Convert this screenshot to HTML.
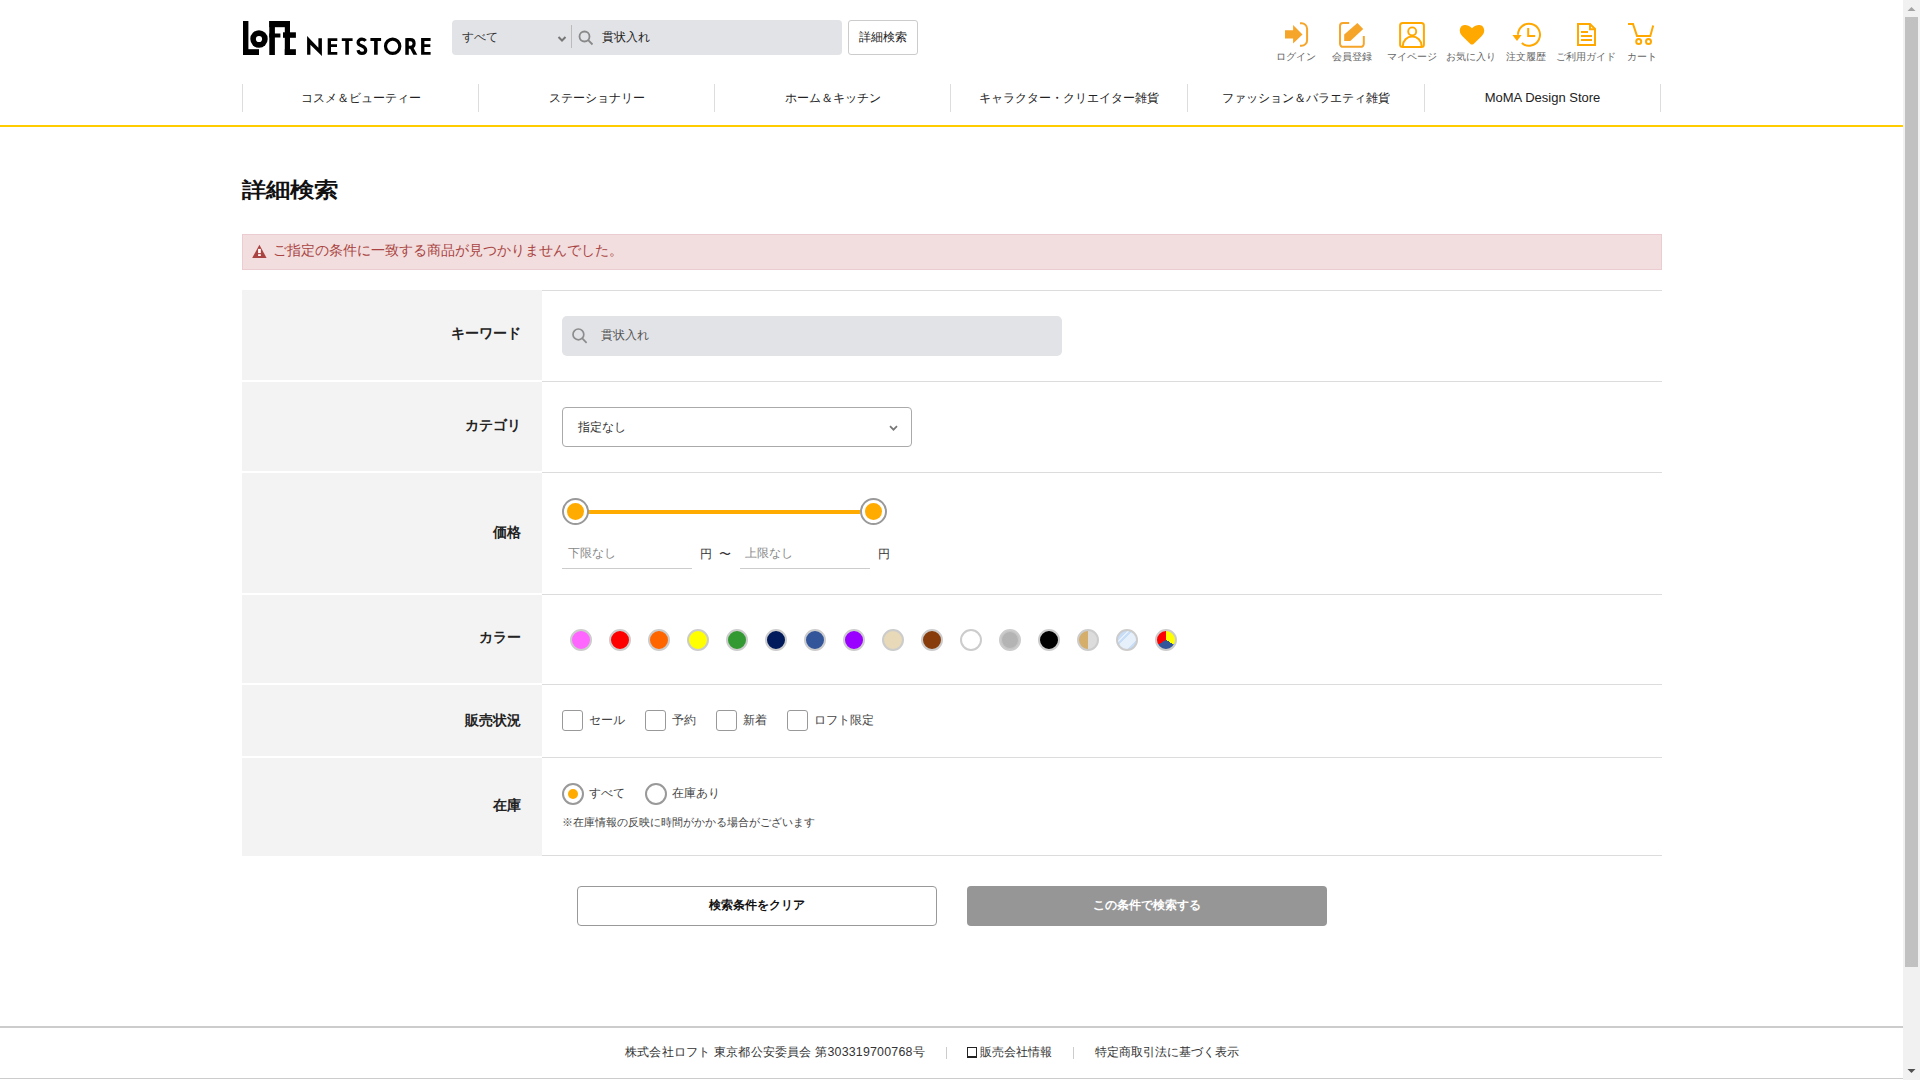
<!DOCTYPE html>
<html lang="ja">
<head>
<meta charset="utf-8">
<title>詳細検索 | ロフト公式通販サイト</title>
<style>
*{box-sizing:border-box;margin:0;padding:0}
html,body{width:1920px;height:1080px;overflow:hidden;background:#fff}
body{font-family:"Liberation Sans",sans-serif;color:#222;position:relative}
.a{position:absolute;white-space:nowrap}
.ic{position:absolute}
.lbl{position:absolute;font-size:10px;color:#666;text-align:center;width:70px;line-height:12px}
.nav{position:absolute;top:84px;height:28px;width:236.33px;border-left:1px solid #ddd;font-size:12px;line-height:28px;text-align:center;color:#222}
.th{position:absolute;left:242px;width:300px;background:#f3f3f3}
.ln{position:absolute;left:542px;width:1120px;height:1px;background:#dcdcdc}
.thl{position:absolute;right:1399px;font-size:14px;font-weight:bold;color:#222;line-height:16px}
.sw{position:absolute;top:629px;width:22px;height:22px;border-radius:50%;border:2px solid #ccc}
.cb{position:absolute;top:710px;width:21px;height:21px;border:1px solid #999;border-radius:3px;background:#fff}
.cbt{position:absolute;top:712px;font-size:12px;color:#444;line-height:16px}
</style>
</head>
<body>
<!-- HEADER -->
<svg class="ic" style="left:240px;top:18px" width="200" height="42" viewBox="240 18 200 42">
  <g fill="#000">
    <rect x="243" y="21" width="5.4" height="34"/>
    <rect x="243" y="49.2" width="16" height="5.8"/>
    <circle cx="259" cy="39" r="8.7"/>
    <rect x="269.3" y="21" width="5.6" height="34"/>
    <rect x="269.3" y="21" width="20.7" height="6.2"/>
    <rect x="269.3" y="33.5" width="11.1" height="4"/>
    <rect x="284.8" y="21" width="5.2" height="34"/>
    <rect x="283" y="32.3" width="12.9" height="5.5"/>
    <rect x="284.8" y="49.2" width="11.1" height="5.8"/>
  </g>
  <circle cx="259" cy="39" r="3.1" fill="#fff"/>
  <g fill="#000">
    <path d="M307.1 36.1 L318.4 47.8 V38.2 H321.9 V55.9 L310.4 44.7 V54.8 H307.1 Z"/>
    <path d="M327.7 38.2 H337.3 V41 H331 V44.2 H337 V46.9 H331 V51.9 H337.3 V54.8 H327.7 Z"/>
    <path d="M341.8 38.2 H352.6 V41 H348.9 V54.8 H345.3 V41 H341.8 Z"/>
    <path d="M370.4 38.1 H381.1 V41 H377.7 V54.8 H374.1 V41 H370.4 Z"/>
    <rect x="405.3" y="38.1" width="3.5" height="16.7"/>
    <path d="M409.4 47.3 H413.2 L417.3 54.8 H413.4 Z"/>
    <path d="M421.1 38.1 H430.6 V41 H424.4 V44.3 H430.3 V47 H424.4 V52 H430.6 V54.8 H421.1 Z"/>
  </g>
  <g fill="none" stroke="#000" stroke-width="3.2">
    <path d="M365.6 40.9 C364.6 39.4 363.4 39.1 362 39.1 C359.6 39.1 358.1 40.6 358.1 42.4 C358.1 44.5 360 45.3 362 46.1 C364.4 47.1 365.7 48.3 365.7 50.3 C365.7 52.3 364.1 53.4 361.8 53.4 C359.8 53.4 358.5 52.2 358 50.1"/>
    <circle cx="392.65" cy="46.3" r="7.15"/>
    <path d="M407 39.6 H410.3 C412.9 39.6 414.1 41.3 414.1 43.4 C414.1 45.6 412.9 47.2 410.3 47.2 H407" stroke-width="3.1"/>
  </g>
</svg>

<div class="a" style="left:452px;top:20px;width:390px;height:35px;background:#e2e3e7;border-radius:4px"></div>
<div class="a" style="left:462px;top:29px;font-size:12px;line-height:16px;color:#333">すべて</div>
<svg class="ic" style="left:557px;top:35px" width="10" height="8" viewBox="0 0 10 8"><path d="M1.5 2 L5 5.5 L8.5 2" stroke="#777" stroke-width="2" fill="none"/></svg>
<div class="a" style="left:571px;top:25px;width:1px;height:23px;background:#bbb"></div>
<svg class="ic" style="left:578px;top:30px" width="16" height="16" viewBox="0 0 16 16"><circle cx="6.5" cy="6.5" r="5" stroke="#888" stroke-width="1.8" fill="none"/><path d="M10.2 10.2 L14.5 14.5" stroke="#888" stroke-width="1.8"/></svg>
<div class="a" style="left:602px;top:29px;font-size:12px;line-height:16px;color:#222">貫状入れ</div>
<div class="a" style="left:848px;top:20px;width:70px;height:35px;border:1px solid #ccc;border-radius:3px;background:#fff;font-size:12px;line-height:33px;text-align:center;color:#222">詳細検索</div>

<!-- header icons -->
<svg class="ic" style="left:1270px;top:15px" width="400" height="40" viewBox="1270 15 400 40">
  <g fill="#f5a52a">
    <path d="M1285 30.3 H1293.1 V25 L1302.5 34.4 L1293.1 43.6 V38.4 H1285 Z"/>
    <path d="M1344.2 34.4 L1357.4 22.9 L1363.2 29 L1350.3 41 H1344.2 Z"/>
  </g>
  <g fill="none" stroke="#f5a52a" stroke-width="2">
    <path d="M1300 23.2 H1301.5 A5.6 5.6 0 0 1 1307.1 28.8 V40.2 A5.6 5.6 0 0 1 1301.5 45.8 H1300"/>
    <path d="M1349.2 23 H1343 A3 3 0 0 0 1340 26 V43.8 A3 3 0 0 0 1343 46.8 H1360.8 A3 3 0 0 0 1363.8 43.8 V36"/>
  </g>
  <g fill="none" stroke="#ffa800" stroke-width="2">
    <rect x="1400.1" y="23" width="23.8" height="23.9" rx="2.5"/>
    <circle cx="1412.2" cy="31.4" r="4" stroke-width="1.9"/>
    <path d="M1402.8 46 A9.4 9.6 0 0 1 1421.6 46"/>
    <path d="M1521.8 43.1 A11 11 0 1 0 1518 34.8"/>
    <path d="M1528.2 28.1 V36 H1535.2"/>
    <path d="M1578 24 H1590 L1595 29 V45 H1578 Z"/>
    <path d="M1590 24 V29.2 H1595"/>
    <path d="M1581 32.1 H1588 M1581 36 H1592 M1581 40 H1592"/>
    <path d="M1628 24 H1633 L1637 35.9 H1650.3 L1653.2 25.6"/>
    <circle cx="1638.7" cy="41.6" r="2.5"/>
    <circle cx="1648.5" cy="41.6" r="2.5"/>
  </g>
  <g fill="#ffa800">
    <path d="M1512.4 35 H1521.6 L1517 40.9 Z"/>
    <path d="M1472 28.3 C1469.5 25.2 1466.8 24.8 1464.6 24.9 C1461.5 25.1 1459.8 27.6 1459.8 30.7 C1459.8 33.3 1461.2 35 1463.2 36.9 L1470.4 43.9 C1471.3 44.8 1472.7 44.8 1473.6 43.9 L1480.8 36.9 C1482.8 35 1484.2 33.3 1484.2 30.7 C1484.2 27.6 1482.5 25.1 1479.4 24.9 C1477.2 24.8 1474.5 25.2 1472 28.3 Z"/>
  </g>
</svg>
<div class="lbl" style="left:1261.3px;top:51px">ログイン</div>
<div class="lbl" style="left:1316.5px;top:51px">会員登録</div>
<div class="lbl" style="left:1376.5px;top:51px">マイページ</div>
<div class="lbl" style="left:1436px;top:51px">お気に入り</div>
<div class="lbl" style="left:1491.3px;top:51px">注文履歴</div>
<div class="lbl" style="left:1551.2px;top:51px">ご利用ガイド</div>
<div class="lbl" style="left:1606.5px;top:51px">カート</div>

<!-- NAV -->
<div class="nav" style="left:242px;width:236px">コスメ＆ビューティー</div>
<div class="nav" style="left:478px;width:236px">ステーショナリー</div>
<div class="nav" style="left:714px;width:236px">ホーム＆キッチン</div>
<div class="nav" style="left:950px;width:237px">キャラクター・クリエイター雑貨</div>
<div class="nav" style="left:1187px;width:237px">ファッション＆バラエティ雑貨</div>
<div class="nav" style="left:1424px;border-right:1px solid #ddd;width:237px;font-size:13px">MoMA Design Store</div>
<div class="a" style="left:0;top:125px;width:1903px;height:2px;background:#ffcc00"></div>

<!-- TITLE -->
<div class="a" style="left:242px;top:178px;font-size:24px;font-weight:bold;line-height:28px;color:#111;transform:scaleY(0.86);transform-origin:0 0">詳細検索</div>

<!-- ALERT -->
<div class="a" style="left:242px;top:234px;width:1420px;height:36px;background:#f2dede;border:1px solid #ebccd1"></div>
<svg class="ic" style="left:252px;top:244px" width="15" height="15" viewBox="0 0 15 15"><path d="M7.4 0.7 L14.6 14 L0.2 14 Z" fill="#a94442"/><rect x="6.1" y="4.9" width="2.7" height="4.2" fill="#fff"/><rect x="6.1" y="10.2" width="2.7" height="1.8" fill="#fff"/></svg>
<div class="a" style="left:273px;top:242px;font-size:14px;line-height:16px;color:#a94442">ご指定の条件に一致する商品が見つかりませんでした。</div>

<!-- TABLE -->
<div class="th" style="top:290px;height:90px"></div>
<div class="th" style="top:382px;height:89px"></div>
<div class="th" style="top:473px;height:120px"></div>
<div class="th" style="top:595px;height:88px"></div>
<div class="th" style="top:685px;height:71px"></div>
<div class="th" style="top:758px;height:98px"></div>
<div class="ln" style="top:290px"></div>
<div class="ln" style="top:381px"></div>
<div class="ln" style="top:472px"></div>
<div class="ln" style="top:594px"></div>
<div class="ln" style="top:684px"></div>
<div class="ln" style="top:757px"></div>
<div class="ln" style="top:855px"></div>

<div class="thl" style="top:325px">キーワード</div>
<div class="thl" style="top:417px">カテゴリ</div>
<div class="thl" style="top:524px">価格</div>
<div class="thl" style="top:629px">カラー</div>
<div class="thl" style="top:712px">販売状況</div>
<div class="thl" style="top:797px">在庫</div>

<!-- keyword -->
<div class="a" style="left:562px;top:316px;width:500px;height:40px;background:#e2e3e7;border-radius:5px"></div>
<svg class="ic" style="left:571px;top:327px" width="18" height="18" viewBox="0 0 18 18"><circle cx="7.4" cy="7.4" r="5.4" stroke="#8c8c8c" stroke-width="1.7" fill="none"/><path d="M11.3 11.3 L15.6 15.8" stroke="#8c8c8c" stroke-width="1.7"/></svg>
<div class="a" style="left:601px;top:327px;font-size:12px;line-height:16px;color:#555">貫状入れ</div>

<!-- category -->
<div class="a" style="left:562px;top:407px;width:350px;height:40px;border:1px solid #aaa;border-radius:4px;background:#fff"></div>
<div class="a" style="left:578px;top:419px;font-size:12px;line-height:16px;color:#333">指定なし</div>
<svg class="ic" style="left:888px;top:424px" width="11" height="8" viewBox="0 0 11 8"><path d="M2 2.2 L5.5 5.7 L9 2.2" stroke="#777" stroke-width="1.7" fill="none"/></svg>

<!-- price -->
<div class="a" style="left:588px;top:510px;width:272px;height:4px;background:#ffab00"></div>
<div class="a" style="left:562px;top:498px;width:27px;height:27px;border-radius:50%;background:#fff;border:2px solid #999"></div>
<div class="a" style="left:567px;top:503px;width:17px;height:17px;border-radius:50%;background:#ffab00"></div>
<div class="a" style="left:860px;top:498px;width:27px;height:27px;border-radius:50%;background:#fff;border:2px solid #999"></div>
<div class="a" style="left:865px;top:503px;width:17px;height:17px;border-radius:50%;background:#ffab00"></div>
<div class="a" style="left:562px;top:568px;width:130px;height:1px;background:#ccc"></div>
<div class="a" style="left:740px;top:568px;width:130px;height:1px;background:#ccc"></div>
<div class="a" style="left:568px;top:545px;font-size:12px;line-height:16px;color:#888">下限なし</div>
<div class="a" style="left:745px;top:545px;font-size:12px;line-height:16px;color:#888">上限なし</div>
<div class="a" style="left:700px;top:546px;font-size:12px;line-height:16px;color:#333">円</div>
<div class="a" style="left:719px;top:546px;font-size:12px;line-height:16px;color:#333">〜</div>
<div class="a" style="left:878px;top:546px;font-size:12px;line-height:16px;color:#333">円</div>

<!-- colors -->
<div class="sw" style="left:570px;background:#ff66ff"></div>
<div class="sw" style="left:609px;background:#ff0000"></div>
<div class="sw" style="left:648px;background:#ff6600"></div>
<div class="sw" style="left:687px;background:#ffff00"></div>
<div class="sw" style="left:726px;background:#339933"></div>
<div class="sw" style="left:765px;background:#001a5c"></div>
<div class="sw" style="left:804px;background:#335599"></div>
<div class="sw" style="left:843px;background:#9900ff"></div>
<div class="sw" style="left:882px;background:#e8d9b8"></div>
<div class="sw" style="left:921px;background:#883c0c"></div>
<div class="sw" style="left:960px;background:#ffffff"></div>
<div class="sw" style="left:999px;background:#b4b4b4;box-shadow:inset 0 0 0 1px #c8c8c8"></div>
<div class="sw" style="left:1038px;background:#000000"></div>
<div class="sw" style="left:1077px;background:linear-gradient(90deg,#d4ae6a 50%,#dcdcdc 50%)"></div>
<div class="sw" style="left:1116px;background:linear-gradient(135deg,#c8ddf8 0 27%,#e6f0fb 27% 33%,#c8ddf8 33% 41%,#e6f0fb 41% 76%,#c8ddf8 76%)"></div>
<div class="sw" style="left:1155px;background:conic-gradient(#ffff00 0deg 120deg,#335599 120deg 240deg,#ff0000 240deg 360deg)"></div>

<!-- sales status -->
<div class="cb" style="left:562px"></div><div class="cbt" style="left:589px">セール</div>
<div class="cb" style="left:645px"></div><div class="cbt" style="left:672px">予約</div>
<div class="cb" style="left:716px"></div><div class="cbt" style="left:743px">新着</div>
<div class="cb" style="left:787px"></div><div class="cbt" style="left:814px">ロフト限定</div>

<!-- stock -->
<div class="a" style="left:562px;top:783px;width:22px;height:22px;border-radius:50%;border:2px solid #999;background:#fff"></div>
<div class="a" style="left:568px;top:789px;width:10px;height:10px;border-radius:50%;background:#ffab00"></div>
<div class="cbt" style="left:589px;top:785px">すべて</div>
<div class="a" style="left:645px;top:783px;width:22px;height:22px;border-radius:50%;border:2px solid #999;background:#fff"></div>
<div class="cbt" style="left:672px;top:785px">在庫あり</div>
<div class="a" style="left:562px;top:814px;font-size:11px;line-height:16px;color:#444">※在庫情報の反映に時間がかかる場合がございます</div>

<!-- buttons -->
<div class="a" style="left:577px;top:886px;width:360px;height:40px;border:1px solid #999;border-radius:4px;background:#fff;font-size:12px;font-weight:bold;line-height:36px;text-align:center;color:#111">検索条件をクリア</div>
<div class="a" style="left:967px;top:886px;width:360px;height:40px;border-radius:4px;background:#969696;font-size:12px;font-weight:bold;line-height:38px;text-align:center;color:#fff">この条件で検索する</div>

<!-- FOOTER -->
<div class="a" style="left:0;top:1026px;width:1903px;height:2px;background:#ccc"></div>
<div class="a" style="left:625px;top:1044px;font-size:12.4px;letter-spacing:0.2px;line-height:16px;color:#333">株式会社ロフト 東京都公安委員会 第303319700768号</div>
<div class="a" style="left:946px;top:1047px;width:1px;height:12px;background:#ccc"></div>
<div class="a" style="left:967px;top:1047px;width:10px;height:11px;border:1.5px solid #222;border-bottom-width:2.5px"></div>
<div class="a" style="left:980px;top:1044px;font-size:12px;line-height:16px;color:#333">販売会社情報</div>
<div class="a" style="left:1073px;top:1047px;width:1px;height:12px;background:#ccc"></div>
<div class="a" style="left:1095px;top:1044px;font-size:12px;line-height:16px;color:#333">特定商取引法に基づく表示</div>
<div class="a" style="left:0;top:1078px;width:1903px;height:1px;background:#ccc"></div>

<!-- SCROLLBAR -->
<div class="a" style="left:1903px;top:0;width:17px;height:1080px;background:#f1f1f1"></div>
<div class="a" style="left:1905px;top:17px;width:13px;height:950px;background:#c1c1c1"></div>
<svg class="ic" style="left:1903px;top:0" width="17" height="17" viewBox="0 0 17 17"><path d="M4.5 11 L8.5 7 L12.5 11 Z" fill="#a3a3a3"/></svg>
<svg class="ic" style="left:1903px;top:1063px" width="17" height="17" viewBox="0 0 17 17"><path d="M4.5 6 L8.5 10 L12.5 6 Z" fill="#505050"/></svg>
</body>
</html>
